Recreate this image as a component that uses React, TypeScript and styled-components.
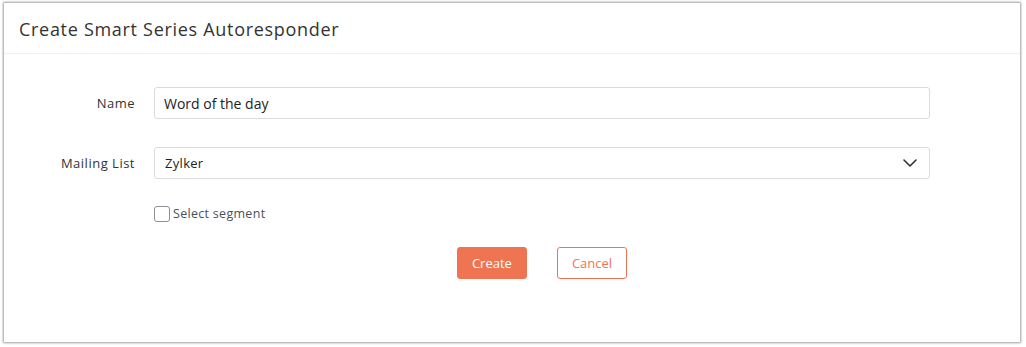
import React, { FC, useState } from 'react'
import styled, { createGlobalStyle } from 'styled-components'

const GlobalStyle = createGlobalStyle`
  html, body {
    margin: 0;
    padding: 0;
    background: #ffffff;
  }
  body {
    font-family: 'Open Sans', 'Liberation Sans', sans-serif;
    color: #333;
  }
`

const App: FC = () => {
  const [name, setName] = useState('Word of the day')
  const [segment, setSegment] = useState(false)

  return (
    <>
      <GlobalStyle />
      <Page>
        <Panel>
          <Header>
            <Title>Create Smart Series Autoresponder</Title>
          </Header>
          <Body>
            <FormGrid>
              <Label>Name</Label>
              <TextInput value={name} onChange={(e) => setName(e.target.value)} />
              <Label>Mailing List</Label>
              <SelectBox>
                <span>Zylker</span>
                <svg width="14" height="8" viewBox="0 0 14 8" fill="none">
                  <path d="M1 1l6 6 6-6" stroke="#333" strokeWidth="1.6" strokeLinecap="round" strokeLinejoin="round" />
                </svg>
              </SelectBox>
              <span />
              <CheckRow>
                <CheckBox
                  type="checkbox"
                  checked={segment}
                  onChange={() => setSegment(!segment)}
                />
                <CheckLabel>Select segment</CheckLabel>
              </CheckRow>
              <span />
              <Actions>
                <Button primary>Create</Button>
                <Button>Cancel</Button>
              </Actions>
            </FormGrid>
          </Body>
        </Panel>
      </Page>
    </>
  )
}

export default App

const Page = styled.div`
  padding: 3px 6px 5px 4px;
`

const Panel = styled.div`
  width: 1016px;
  height: 339px;
  background: #fff;
  box-shadow: 0 0 2px 1px rgba(0, 0, 0, 0.38);
  box-sizing: border-box;
`

const Header = styled.div`
  height: 51px;
  display: flex;
  align-items: center;
  padding: 0 15px;
  border-bottom: 1px solid #f0f0f0;
  box-sizing: border-box;
`

const Title = styled.h1`
  margin: 0;
  font-size: 18px;
  font-weight: 400;
  color: #333;
  letter-spacing: 0.7px;
  padding-top: 2px;
`

const Body = styled.div`
  padding-top: 33px;
`

const FormGrid = styled.div`
  display: grid;
  grid-template-columns: 131px 776px;
  column-gap: 19px;
  row-gap: 28px;
  align-items: center;
`

const Label = styled.label`
  text-align: right;
  font-size: 13px;
  letter-spacing: 0.5px;
  color: #333;
`

const fieldBase = `
  width: 776px;
  height: 32px;
  box-sizing: border-box;
  border: 1px solid #dcdcdc;
  border-radius: 3px;
  background: #fff;
  font-family: 'Open Sans', 'Liberation Sans', sans-serif;
  color: #222;
`

const TextInput = styled.input`
  ${fieldBase}
  padding: 0 9px;
  font-size: 14px;
  outline: none;
`

const SelectBox = styled.div`
  ${fieldBase}
  display: flex;
  align-items: center;
  justify-content: space-between;
  padding: 0 12px 0 10px;
  font-size: 13px;
  letter-spacing: 0.3px;
`

const CheckRow = styled.div`
  display: flex;
  align-items: center;
  gap: 3px;
  margin-top: -2px;
`

const CheckBox = styled.input`
  appearance: none;
  margin: 0;
  width: 16px;
  height: 16px;
  border: 1px solid #8a8f99;
  border-radius: 3px;
  background: #fff;
  box-sizing: border-box;
`

const CheckLabel = styled.span`
  font-size: 12.5px;
  letter-spacing: 0.3px;
  color: #4a5060;
`

const Actions = styled.div`
  display: flex;
  justify-content: center;
  gap: 30px;
  margin-top: -3px;
`

const Button = styled.button<{ primary?: boolean }>`
  height: 32px;
  min-width: 68px;
  padding: 0 14px;
  border-radius: 3px;
  border: 1px solid #ef7452;
  background: ${(p) => (p.primary ? '#ef7452' : '#fff')};
  color: ${(p) => (p.primary ? '#fff' : '#ef7452')};
  font-family: 'Open Sans', 'Liberation Sans', sans-serif;
  font-size: 13px;
  cursor: pointer;
`
